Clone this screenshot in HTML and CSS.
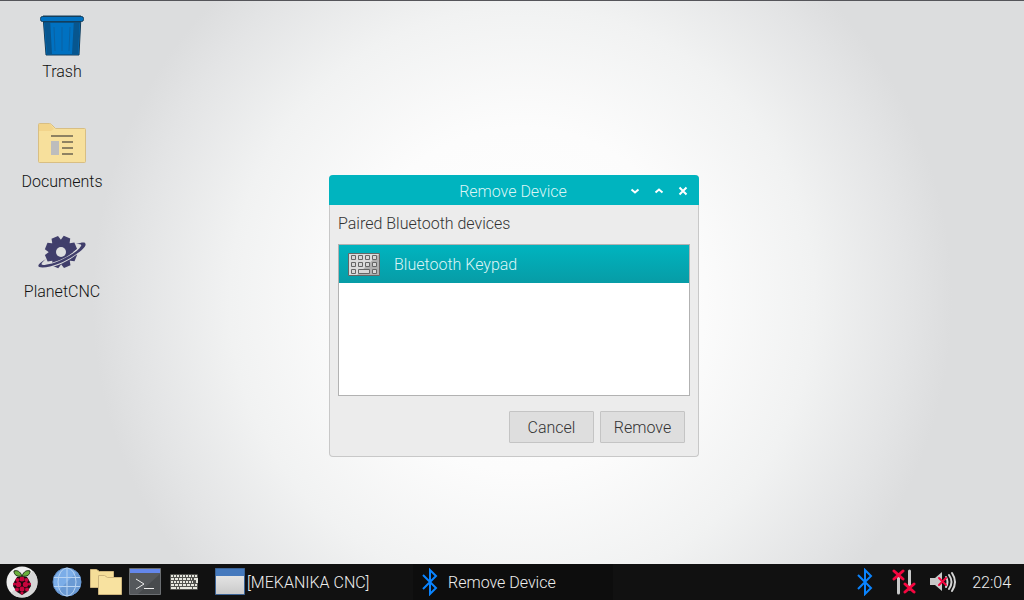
FILE: index.html
```html
<!DOCTYPE html>
<html lang="en">

<head>
  <meta charset="UTF-8">
  <meta name="viewport" content="width=device-width, initial-scale=1.0">
  <title>Desktop</title>
  <link rel="stylesheet" href="styles.css">
</head>

<body>

  <main class="desktop">
    <nav class="shortcuts">
      <a class="shortcut" href="#trash">
        <svg width="48" height="48" viewBox="0 0 48 48">
          <path d="M5 7h38l-2 39H8z" fill="#0071c1" stroke="#143e5c"/>
          <path d="M6 9h6l2 36H9zM42 9h-6l-2 36h6z" fill="#07568f"/>
          <path d="M16 18l1 24M24 18v24M32 18l-1 24" stroke="#0a62a3" fill="none"/>
          <path d="M6 13.500h36" stroke="#0a4f80"/>
          <rect x="2.500" y="7.500" width="43" height="5" rx="2" fill="#0071c1" stroke="#143e5c"/>
        </svg>
        <span>Trash</span>
      </a>
      <a class="shortcut" href="#documents">
        <svg width="48" height="48" viewBox="0 0 48 48">
          <path d="M.5 42.500v-37q0-1 1-1h10q1 0 2 1l4 4h29q1 0 1 1v32q0 1-1 1h-45q-1 0-1-1z" fill="#f7e09c" stroke="#d8be83"/>
          <path d="M1 5h11l4 5-3 2H1z" fill="#f2d48b"/>
          <path d="M13 17h22M24 23h11M24 29h11M24 35h11" stroke="#8e8262" stroke-width="2"/>
          <path d="M13 22h8v14h-8z" fill="#bdbdbd"/>
        </svg>
        <span>Documents</span>
      </a>
      <a class="shortcut" href="#planetcnc">
        <svg width="48" height="48" viewBox="0 0 48 48">
          <g fill="#403e6b">
            <circle cx="23" cy="23" r="12"/>
            <g id="teeth">
              <path id="tooth" d="M18 13l1.500-6h7l1.500 6z" transform="rotate(22 23 23)"/>
              <use href="#tooth" transform="rotate(45 23 23)"/>
              <use href="#tooth" transform="rotate(90 23 23)"/>
              <use href="#tooth" transform="rotate(135 23 23)"/>
            </g>
            <use href="#teeth" transform="rotate(180 23 23)"/>
          </g>
          <circle cx="23" cy="23" r="5" fill="#dddedf"/>
          <path d="M4 36c10 2 28-5 40-18" fill="none" stroke="#dddedf" stroke-width="4"/>
          <path d="M8 30q-10 6-7 8c8 2 25-4 36-12 9-6 12-10 10-12-1-1-5 0-9 1 4 0 6 0 5 2-2 4-8 8-16 12-9 5-18 7-22 7-3 0-1-3 3-6z" fill="#403e6b"/>
        </svg>
        <span>PlanetCNC</span>
      </a>
    </nav>

    <section class="dialog" aria-labelledby="dialog-title">
      <header class="titlebar">
        <h1 id="dialog-title">Remove Device</h1>
        <div class="window-buttons">
          <button type="button" aria-label="Minimize">
            <svg width="10" height="10" viewBox="0 0 10 10"><path d="M1.500 3.500L5 6.500l3.500-3"/></svg>
          </button>
          <button type="button" aria-label="Maximize">
            <svg width="10" height="10" viewBox="0 0 10 10"><path d="M1.500 6.500L5 3.500l3.500 3"/></svg>
          </button>
          <button type="button" aria-label="Close">
            <svg width="10" height="10" viewBox="0 0 10 10"><path d="M1.500 1.500l7 7M8.500 1.500l-7 7"/></svg>
          </button>
        </div>
      </header>
      <div class="dialog-body">
        <h2 id="list-title">Paired Bluetooth devices</h2>
        <ul class="devices" aria-labelledby="list-title">
          <li>
            <button type="button" class="device">
              <svg width="32" height="24" viewBox="0 0 32 24">
                <path d="M.5.5h31v22H.5z" fill="#dcdcdc" stroke="#666"/>
                <path d="M31 1v21H9z" fill="#b0b0b0"/>
                <g fill="#d8d8d8" stroke="#666">
                  <path d="M3.500 2.500h4v4h-4zM10.500 2.500h4v4h-4zM17.500 2.500h4v4h-4zM24.500 2.500h4v4h-4z"/>
                  <path d="M3.500 9.500h4v4h-4zM10.500 9.500h4v4h-4zM17.500 9.500h4v4h-4zM24.500 9.500h4v4h-4z"/>
                  <path d="M3.500 16.500h4v4h-4zM10.500 16.500h11v4h-11zM24.500 16.500h4v4h-4z"/>
                </g>
              </svg>
              Bluetooth Keypad
            </button>
          </li>
        </ul>
        <div class="actions">
          <button type="button">Cancel</button>
          <button type="button">Remove</button>
        </div>
      </div>
    </section>
  </main>

  <footer class="taskbar">
    <div class="launchers">
      <button type="button" aria-label="Menu">
        <svg width="32" height="32" viewBox="0 0 32 32">
          <circle cx="16" cy="16" r="15.500" fill="#eee"/>
          <path d="M27 5A15.500 15.500 0 0 1 5 27z" fill="#d6d6d6"/>
          <path d="M16 10l5 1 3 5 1 4-4 6-5 3-5-3-4-6 1-4 3-5z" fill="#1a0a0e"/>
          <g fill="#c7053d">
            <circle cx="16" cy="13" r="2.500"/><circle cx="11.500" cy="14" r="2"/><circle cx="20.500" cy="14" r="2"/>
            <circle cx="12.500" cy="18.500" r="2.700"/><circle cx="19.500" cy="18.500" r="2.700"/>
            <circle cx="8.500" cy="18" r="1.600"/><circle cx="23.500" cy="18" r="1.600"/>
            <circle cx="16" cy="23" r="2.500"/><circle cx="11" cy="23.500" r="2"/><circle cx="21" cy="23.500" r="2"/>
            <circle cx="16" cy="27" r="1.600"/>
          </g>
          <path d="M16 10c-2-5-5-6-8-5 0 4 3 6 8 5zM16 10c2-5 5-6 8-5 0 4-3 6-8 5z" fill="#69b03c" stroke="#1c2c12"/>
        </svg>
      </button>
      <button type="button" aria-label="Web browser">
        <svg width="30" height="30" viewBox="0 0 30 30">
          <circle cx="15" cy="15" r="14" fill="#7bade8" stroke="#5d87bd"/>
          <path d="M25 5A14 14 0 0 1 5 25z" fill="#6a9ad4"/>
          <g fill="none" stroke="#b9d4f2">
            <path d="M15 1v28M2 10.500h26M2 19.500h26"/>
            <ellipse cx="15" cy="15" rx="9" ry="14"/>
          </g>
        </svg>
      </button>
      <button type="button" aria-label="File manager">
        <svg width="32" height="32" viewBox="0 0 32 32">
          <path d="M.5 21.500V3.500h6l3 2h14v16z" fill="#f5dd98" stroke="#cdb47c"/>
          <path d="M8.500 28.500v-19h6l3 2h14v17z" fill="#f8e2a0" stroke="#cdb47c"/>
        </svg>
      </button>
      <button type="button" aria-label="Terminal">
        <svg width="32" height="28" viewBox="0 0 32 28">
          <path d="M.5.5h31v26H.5z" fill="#55585c" stroke="#6b6e72"/>
          <path d="M31 6v20H9z" fill="#484b4e"/>
          <path d="M1 1h30v4H1z" fill="#6487ec"/>
          <path d="M7 11l8 5-8 5M15 20.500h10" fill="none" stroke="#eee"/>
        </svg>
      </button>
      <button type="button" aria-label="Keyboard">
        <svg width="28" height="18" viewBox="0 0 28 18">
          <rect y="1" width="28" height="16" rx="1" fill="#52524e"/>
          <g fill="none" stroke="#e6e6de" stroke-width="2">
            <path d="M1 3h26" stroke-dasharray="2 1"/>
            <path d="M1 6h21" stroke-dasharray="3 1"/>
            <path d="M1 9h22" stroke-dasharray="2 1"/>
            <path d="M1 12h26" stroke-dasharray="3 1"/>
            <path d="M1 15h5M7 15h2M10 15h12M23 15h4M24 6h3v4"/>
          </g>
        </svg>
      </button>
    </div>
    <div class="tasks">
      <button type="button" class="task">
        <svg width="30" height="28" viewBox="0 0 30 28">
          <defs>
            <linearGradient id="pane" x2="0" y2="1"><stop stop-color="#eee"/><stop offset="1" stop-color="#c9c9c9"/></linearGradient>
          </defs>
          <path d="M.5.5h29v26H.5z" fill="url(#pane)" stroke="#3c6395"/>
          <path d="M1 1h28v7H1z" fill="#4579bd"/>
        </svg>
        <span>[MEKANIKA CNC]</span>
      </button>
      <button type="button" class="task active">
        <svg class="bluetooth" width="16" height="28" viewBox="0 0 16 28"><path d="M1 7l13 13-6 6V2l6 6L1 21"/></svg>
        <span>Remove Device</span>
      </button>
    </div>
    <div class="tray">
      <button type="button" aria-label="Bluetooth">
        <svg class="bluetooth" width="16" height="28" viewBox="0 0 16 28"><path d="M1 7l13 13-6 6V2l6 6L1 21"/></svg>
      </button>
      <button type="button" aria-label="Network disconnected">
        <svg width="24" height="26" viewBox="0 0 24 26" fill="none" stroke-linecap="round">
          <path d="M6.500 6v18M17.500 2v18" stroke="#c8c8c8" stroke-width="3"/>
          <path d="M2 2l9 8M11 2l-9 8M13 15l9 8M22 15l-9 8" stroke="#f5063f" stroke-width="3"/>
        </svg>
      </button>
      <button type="button" aria-label="Volume muted">
        <svg width="28" height="24" viewBox="0 0 28 24" fill="none" stroke-linecap="round">
          <path d="M1 8h5l7-6v19l-7-6H1z" fill="#c8c8c8"/>
          <path d="M17 7q3 5 0 10M20 5q5 7 0 14M23 3q6 9 0 18" stroke="#d4d4d4" stroke-width="2"/>
          <path d="M10 8l7 7M17 8l-7 7" stroke="#f5063f" stroke-width="2"/>
        </svg>
      </button>
      <time>22:04</time>
    </div>
  </footer>

</body>

</html>
```

FILE: styles.css
```css
* {
  box-sizing: border-box;
}

body {
  margin: 0;
  min-height: 100vh;
  display: flex;
  flex-direction: column;
  font: 300 16px/20px Roboto, sans-serif;
  color: #1c1c1c;
}

button {
  padding: 0;
  border: none;
  background: none;
  font: inherit;
  color: inherit;
  cursor: pointer;
}

svg {
  display: block;
  flex: none;
}

h1,
h2 {
  margin: 0;
  font: inherit;
}

.desktop {
  position: relative;
  flex: 1;
  border-top: 1px solid #55555a;
  background: radial-gradient(circle 430px at 51% 53%, #fff 0%, #fcfcfc 40%, #f1f2f2 68%, #e3e4e5 90%, #dcddde 100%);
}

.shortcuts {
  display: flex;
  flex-direction: column;
  gap: 42px;
  width: 124px;
  padding-top: 8px;
}

.shortcut {
  display: flex;
  flex-direction: column;
  align-items: center;
  height: 68px;
  gap: 5px;
  color: #111;
  text-decoration: none;
}

/* window */
.dialog {
  position: absolute;
  left: 329px;
  top: 174px;
  width: 370px;
  border: 1px solid #c8c8c8;
  border-top: none;
  border-radius: 4px;
  background: #ececec;
}

.titlebar {
  display: flex;
  align-items: center;
  height: 30px;
  margin: 0 -1px;
  padding: 2px 10px 0 0;
  border-radius: 4px 4px 0 0;
  background: #00b4bf;
  color: #dcf5f6;
}

.titlebar h1 {
  flex: 1;
  padding: 2px 0 0 68px;
  text-align: center;
}

.window-buttons {
  display: flex;
  gap: 12px;
}

.window-buttons button {
  width: 12px;
  padding: 1px;
}

.window-buttons path {
  fill: none;
  stroke: #fff;
  stroke-width: 2;
}

.dialog-body {
  padding: 9px 8px 13px;
}

.dialog-body h2 {
  color: #333;
}

.devices {
  height: 152px;
  margin: 10px 0 15px;
  padding: 0;
  border: 1px solid #b2b2b2;
  background: #fff;
  list-style: none;
}

.device {
  display: flex;
  align-items: center;
  gap: 14px;
  width: 100%;
  height: 38px;
  padding: 2px 9px 0;
  background: linear-gradient(#00b4bf, #079ca6);
  color: #dcf5f6;
}

.actions {
  display: flex;
  justify-content: flex-end;
  gap: 6px;
  padding-right: 5px;
}

.actions button {
  width: 85px;
  height: 32px;
  padding-top: 2px;
  border: 1px solid #c4c4c4;
  border-radius: 1px;
  background: #dedede;
  color: #333;
}

/* bottom panel */
.taskbar {
  display: flex;
  align-items: center;
  height: 36px;
  background: #111;
  color: #eee;
}

.launchers {
  display: flex;
  align-items: center;
  padding-left: 3px;
}

.launchers button {
  display: flex;
  justify-content: center;
  width: 39px;
}

.launchers button:first-child {
  width: 44px;
  padding-right: 6px;
}

.tasks {
  display: flex;
  flex: 1;
  padding-left: 10px;
}

.task {
  display: flex;
  align-items: center;
  gap: 2px;
  width: 200px;
  height: 36px;
  padding-left: 2px;
}

.task span,
.tray time {
  padding-top: 2px;
}

.task.active {
  gap: 10px;
  padding-left: 9px;
  background: #0d0d0d;
}

.bluetooth {
  fill: none;
  stroke: #0a84ff;
  stroke-width: 2;
}

.tray {
  display: flex;
  align-items: center;
  gap: 13px;
  padding-right: 13px;
}

.tray button:first-child {
  padding-right: 6px;
}

.tray time {
  padding-left: 2px;
}
```
